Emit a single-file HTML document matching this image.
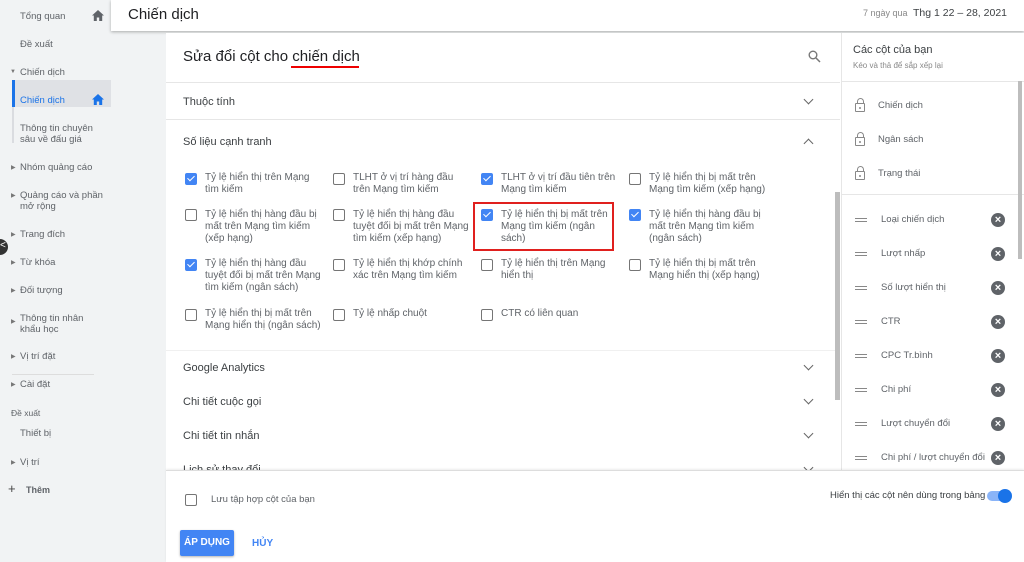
<!DOCTYPE html>
<html><head><meta charset="utf-8"><style>
*{margin:0;padding:0;box-sizing:border-box}
body{width:1024px;height:562px;overflow:hidden;background:#f1f3f4;font-family:"Liberation Sans",Arial,sans-serif;color:#3c4043;position:relative}
.a{position:absolute;white-space:nowrap}
.side{font-size:9.5px;color:#5f6368}
.tri{font-size:6px;color:#777}
.cb{position:absolute;width:12px;height:12px;border:1.6px solid #757575;border-radius:2px;background:#fff}
.cb.on{background:#4285f4;border-color:#4285f4}
.cb.on:after{content:"";position:absolute;left:3px;top:0px;width:3px;height:6px;border:solid #fff;border-width:0 1.6px 1.6px 0;transform:rotate(45deg)}
.lbl{position:absolute;font-size:10px;line-height:12px;color:#5f6368;white-space:normal;width:118px}
.sec{position:absolute;left:183px;font-size:11px;color:#3c4043}
.chev{position:absolute;left:805px;width:7px;height:7px;border:solid #666;border-width:0 1.5px 1.5px 0;transform:rotate(45deg)}
.x{position:absolute;left:991px;width:14px;height:14px;border-radius:50%;background:#5f6368;color:#fff;font-size:11px;line-height:14px;text-align:center;font-weight:bold}
.drag{position:absolute;left:855px;width:12px;height:4px;border-top:1.3px solid #888;border-bottom:1.3px solid #888}
.ri{position:absolute;left:881px;font-size:9.5px;color:#5f6368}
.lock{position:absolute;left:854px;width:10px;height:9px;border:1.3px solid #888;border-radius:1px}
.lock:before{content:"";position:absolute;left:1px;top:-6px;width:5px;height:5px;border:1.3px solid #888;border-bottom:none;border-radius:4px 4px 0 0}
.lock:after{content:"";position:absolute;left:3px;top:2.5px;width:2px;height:2px;background:#888;border-radius:50%}
</style></head><body>
<!-- sidebar -->
<div class="a side" style="left:20px;top:11px">Tổng quan</div>
<svg class="a" style="left:92px;top:10px" width="12" height="11" viewBox="0 0 12 11"><path d="M6 0L0 5.5h1.8V11h3V7.5h2.4V11h3V5.5H12z" fill="#5f6368"/></svg>
<div class="a side" style="left:20px;top:39px">Đề xuất</div>
<div class="a tri" style="left:10px;top:69px">▼</div><div class="a side" style="left:20px;top:67px">Chiến dịch</div>
<div class="a" style="left:12px;top:80px;width:99px;height:27px;background:#dfe1e5"></div>
<div class="a" style="left:12px;top:80px;width:3px;height:27px;background:#1a73e8"></div>
<div class="a" style="left:12px;top:107px;width:2px;height:36px;background:#dadce0"></div>
<div class="a side" style="left:20px;top:95px;color:#1a73e8">Chiến dịch</div>
<svg class="a" style="left:92px;top:94px" width="12" height="11" viewBox="0 0 12 11"><path d="M6 0L0 5.5h1.8V11h3V7.5h2.4V11h3V5.5H12z" fill="#1a73e8"/></svg>
<div class="a side" style="left:20px;top:123px;line-height:11px">Thông tin chuyên<br>sâu về đấu giá</div>
<div class="a tri" style="left:11px;top:164px">▶</div><div class="a side" style="left:20px;top:162px">Nhóm quảng cáo</div>
<div class="a tri" style="left:11px;top:192px">▶</div><div class="a side" style="left:20px;top:190px;line-height:11px">Quảng cáo và phần<br>mở rộng</div>
<div class="a tri" style="left:11px;top:231px">▶</div><div class="a side" style="left:20px;top:229px">Trang đích</div>
<div class="a tri" style="left:11px;top:259px">▶</div><div class="a side" style="left:20px;top:257px">Từ khóa</div>
<div class="a tri" style="left:11px;top:287px">▶</div><div class="a side" style="left:20px;top:285px">Đối tượng</div>
<div class="a tri" style="left:11px;top:298px;top:298px;display:none">▶</div>
<div class="a tri" style="left:11px;top:318px">▶</div><div class="a side" style="left:20px;top:313px;line-height:11px">Thông tin nhân<br>khẩu học</div>
<div class="a tri" style="left:11px;top:353px">▶</div><div class="a side" style="left:20px;top:351px">Vị trí đặt</div>
<div class="a tri" style="left:11px;top:381px">▶</div><div class="a side" style="left:20px;top:379px">Cài đặt</div>
<div class="a" style="left:12px;top:374px;width:82px;height:1px;background:#ddd"></div>
<div class="a side" style="left:11px;top:408px;font-size:8.5px">Đề xuất</div>
<div class="a side" style="left:20px;top:428px">Thiết bị</div>
<div class="a tri" style="left:11px;top:459px">▶</div><div class="a side" style="left:20px;top:457px">Vị trí</div>
<div class="a" style="left:8px;top:481px;font-size:13px;color:#444">+</div><div class="a side" style="left:26px;top:485px;font-size:9px;font-weight:bold">Thêm</div>
<div class="a" style="left:-8px;top:239px;width:16px;height:16px;border-radius:50%;background:#333"></div>
<div class="a" style="left:0;top:240px;font-size:10px;color:#fff">&lt;</div>
<!-- header -->
<div class="a" style="left:111px;top:0;width:913px;height:31px;background:#fff;box-shadow:0 1px 3px rgba(0,0,0,.3)"></div>
<div class="a" style="left:128px;top:6px;font-size:15px;color:#202124">Chiến dịch</div>
<div class="a" style="left:863px;top:8px;font-size:9px;color:#888">7 ngày qua</div>
<div class="a" style="left:913px;top:7px;font-size:10.5px;color:#3c4043">Thg 1 22 – 28, 2021</div>
<!-- dialog -->
<div class="a" style="left:166px;top:33px;width:858px;height:529px;background:#fff"></div>
<div class="a" style="left:183px;top:48px;font-size:15px;color:#202124">Sửa đổi cột cho chiến dịch</div>
<div class="a" style="left:291px;top:66px;width:68px;height:2px;background:#e00"></div>
<svg class="a" style="left:808px;top:50px" width="13" height="13" viewBox="0 0 13 13"><circle cx="5" cy="5" r="3.8" fill="none" stroke="#777" stroke-width="1.4"/><line x1="8" y1="8" x2="12" y2="12" stroke="#777" stroke-width="1.5"/></svg>
<div class="a" style="left:166px;top:82px;width:674px;height:1px;background:#e6e6e6"></div>
<div class="sec" style="top:96px">Thuộc tính</div><div class="chev" style="top:96px"></div>
<div class="a" style="left:166px;top:119px;width:674px;height:1px;background:#e6e6e6"></div>
<div class="sec" style="top:136px">Số liệu cạnh tranh</div>
<div class="chev" style="top:140px;transform:rotate(225deg)"></div>
<div class="cb on" style="left:185px;top:173px"></div><div class="lbl" style="left:205px;top:172px">Tỷ lệ hiển thị trên Mạng tìm kiếm</div>
<div class="cb" style="left:333px;top:173px"></div><div class="lbl" style="left:353px;top:172px">TLHT ở vị trí hàng đầu trên Mạng tìm kiếm</div>
<div class="cb on" style="left:481px;top:173px"></div><div class="lbl" style="left:501px;top:172px">TLHT ở vị trí đầu tiên trên Mạng tìm kiếm</div>
<div class="cb" style="left:629px;top:173px"></div><div class="lbl" style="left:649px;top:172px">Tỷ lệ hiển thị bị mất trên Mạng tìm kiếm (xếp hạng)</div>
<div class="cb" style="left:185px;top:209px"></div><div class="lbl" style="left:205px;top:209px">Tỷ lệ hiển thị hàng đầu bị mất trên Mạng tìm kiếm (xếp hạng)</div>
<div class="cb" style="left:333px;top:209px"></div><div class="lbl" style="left:353px;top:209px">Tỷ lệ hiển thị hàng đầu tuyệt đối bị mất trên Mạng tìm kiếm (xếp hạng)</div>
<div class="a" style="left:473px;top:202px;width:141px;height:49px;border:2px solid #e0201e"></div>
<div class="cb on" style="left:481px;top:209px"></div><div class="lbl" style="left:501px;top:209px;width:110px">Tỷ lệ hiển thị bị mất trên Mạng tìm kiếm (ngân sách)</div>
<div class="cb on" style="left:629px;top:209px"></div><div class="lbl" style="left:649px;top:209px;width:112px">Tỷ lệ hiển thị hàng đầu bị mất trên Mạng tìm kiếm (ngân sách)</div>
<div class="cb on" style="left:185px;top:259px"></div><div class="lbl" style="left:205px;top:258px">Tỷ lệ hiển thị hàng đầu tuyệt đối bị mất trên Mạng tìm kiếm (ngân sách)</div>
<div class="cb" style="left:333px;top:259px"></div><div class="lbl" style="left:353px;top:258px">Tỷ lệ hiển thị khớp chính xác trên Mạng tìm kiếm</div>
<div class="cb" style="left:481px;top:259px"></div><div class="lbl" style="left:501px;top:258px;width:110px">Tỷ lệ hiển thị trên Mạng hiển thị</div>
<div class="cb" style="left:629px;top:259px"></div><div class="lbl" style="left:649px;top:258px">Tỷ lệ hiển thị bị mất trên Mạng hiển thị (xếp hạng)</div>
<div class="cb" style="left:185px;top:309px"></div><div class="lbl" style="left:205px;top:308px">Tỷ lệ hiển thị bị mất trên Mạng hiển thị (ngân sách)</div>
<div class="cb" style="left:333px;top:309px"></div><div class="lbl" style="left:353px;top:308px">Tỷ lệ nhấp chuột</div>
<div class="cb" style="left:481px;top:309px"></div><div class="lbl" style="left:501px;top:308px">CTR có liên quan</div>
<div class="a" style="left:166px;top:350px;width:674px;height:1px;background:#f0f0f0"></div>
<div class="sec" style="top:362px">Google Analytics</div><div class="chev" style="top:362px"></div>
<div class="sec" style="top:396px">Chi tiết cuộc gọi</div><div class="chev" style="top:396px"></div>
<div class="sec" style="top:430px">Chi tiết tin nhắn</div><div class="chev" style="top:430px"></div>
<div class="sec" style="top:464px">Lịch sử thay đổi</div><div class="chev" style="top:464px"></div>
<div class="a" style="left:835px;top:192px;width:5px;height:208px;background:#bdbdbd"></div>
<!-- right panel -->
<div class="a" style="left:841px;top:33px;width:1px;height:437px;background:#e6e6e6"></div>
<div class="a" style="left:853px;top:44px;font-size:11px;color:#3c4043">Các cột của bạn</div>
<div class="a" style="left:853px;top:61px;font-size:8px;color:#888">Kéo và thả để sắp xếp lại</div>
<div class="a" style="left:841px;top:81px;width:183px;height:1px;background:#e6e6e6"></div>
<div class="lock" style="left:855px;top:103px"></div><div class="ri" style="left:878px;top:100px">Chiến dịch</div>
<div class="lock" style="left:855px;top:137px"></div><div class="ri" style="left:878px;top:134px">Ngân sách</div>
<div class="lock" style="left:855px;top:171px"></div><div class="ri" style="left:878px;top:168px">Trạng thái</div>
<div class="a" style="left:841px;top:194px;width:183px;height:1px;background:#e6e6e6"></div>
<div class="a" style="left:1018px;top:81px;width:4px;height:178px;background:#bdbdbd"></div>
<div class="drag" style="top:218px"></div><div class="ri" style="top:214px">Loại chiến dịch</div><div class="x" style="top:213px">×</div>
<div class="drag" style="top:252px"></div><div class="ri" style="top:248px">Lượt nhấp</div><div class="x" style="top:247px">×</div>
<div class="drag" style="top:286px"></div><div class="ri" style="top:282px">Số lượt hiển thị</div><div class="x" style="top:281px">×</div>
<div class="drag" style="top:320px"></div><div class="ri" style="top:316px">CTR</div><div class="x" style="top:315px">×</div>
<div class="drag" style="top:354px"></div><div class="ri" style="top:350px">CPC Tr.bình</div><div class="x" style="top:349px">×</div>
<div class="drag" style="top:388px"></div><div class="ri" style="top:384px">Chi phí</div><div class="x" style="top:383px">×</div>
<div class="drag" style="top:422px"></div><div class="ri" style="top:418px">Lượt chuyển đổi</div><div class="x" style="top:417px">×</div>
<div class="drag" style="top:456px"></div><div class="ri" style="top:452px">Chi phí / lượt chuyển đổi</div><div class="x" style="top:451px">×</div>
<!-- footer -->
<div class="a" style="left:166px;top:470px;width:858px;height:92px;background:#fff;border-top:1px solid #ddd;box-shadow:0 -1px 2px rgba(0,0,0,.08)"></div>
<div class="cb" style="left:185px;top:494px"></div>
<div class="a" style="left:211px;top:494px;font-size:9.5px;color:#5f6368">Lưu tập hợp cột của bạn</div>
<div class="a" style="left:830px;top:490px;font-size:9.5px;color:#3c4043">Hiển thị các cột nên dùng trong bảng</div>
<div class="a" style="left:987px;top:491px;width:24px;height:10px;border-radius:5px;background:#8ab4f8"></div>
<div class="a" style="left:998px;top:489px;width:14px;height:14px;border-radius:50%;background:#1a73e8"></div>
<div class="a" style="left:180px;top:530px;width:54px;height:26px;background:#4285f4;border-radius:2px;box-shadow:0 1px 2px rgba(0,0,0,.3);color:#fff;font-size:10px;font-weight:bold;text-align:center;line-height:26px">ÁP DỤNG</div>
<div class="a" style="left:252px;top:538px;font-size:10px;font-weight:bold;color:#4285f4">HỦY</div>
</body></html>
